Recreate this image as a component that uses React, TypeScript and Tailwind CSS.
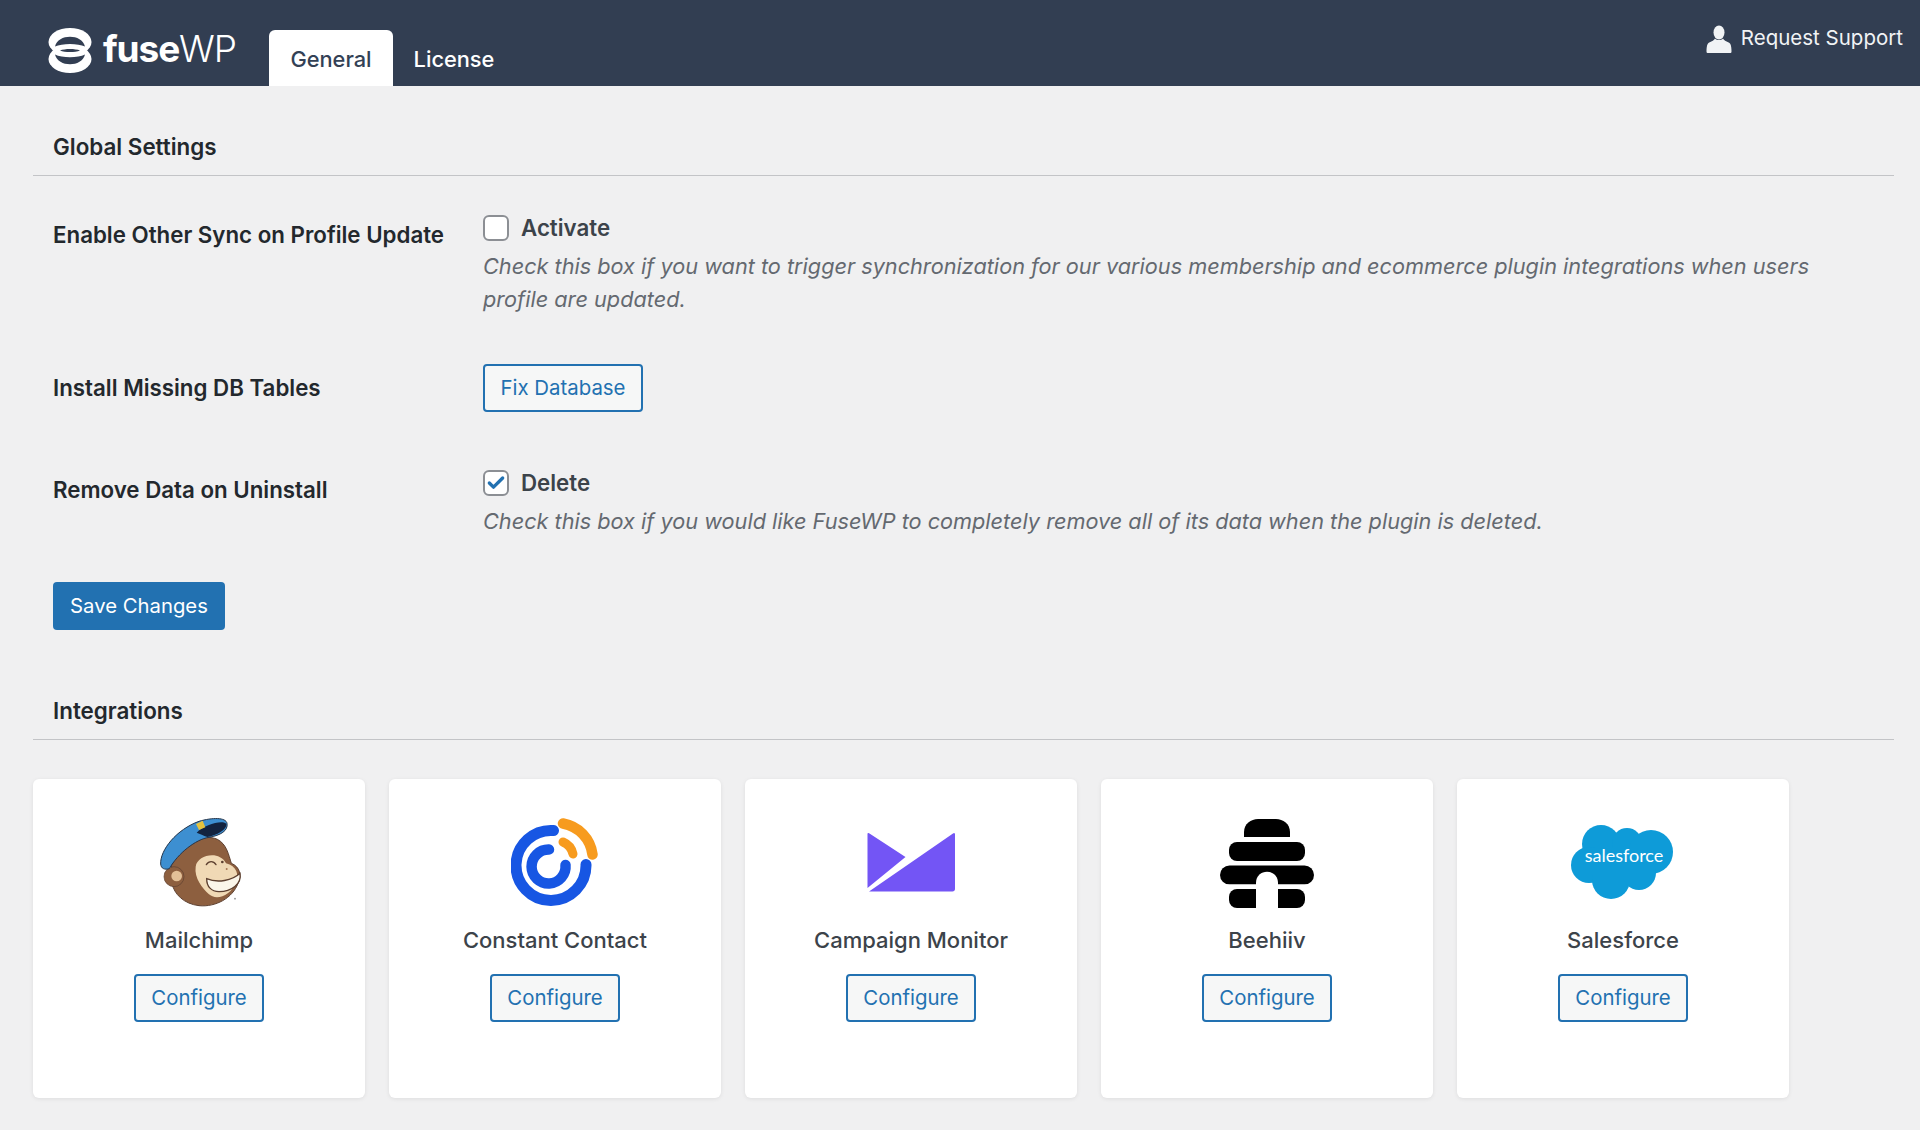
import { Check } from "lucide-react";

const FONT = "font-['Inter','Liberation_Sans',sans-serif]";

function FuseMark() {
  return (
    <svg width="44" height="45" viewBox="0 0 44 45" fill="white">
      <ellipse cx="22" cy="14" rx="21.5" ry="14" />
      <ellipse cx="22" cy="31" rx="21.5" ry="14" />
      <path d="M7 18.5C10 5.5 34 5.5 37 18.5C30 15 14 15 7 18.5Z" fill="#323e52" />
      <path d="M7 26.5C10 39.5 34 39.5 37 26.5C30 30 14 30 7 26.5Z" fill="#323e52" />
      <path d="M12 22.5C17 20.5 27 20.5 32 22.5C27 24.5 17 24.5 12 22.5Z" fill="#323e52" />
    </svg>
  );
}

function PersonIcon() {
  return (
    <svg width="26" height="28" viewBox="0 0 26 28" fill="#f1f3f5">
      <ellipse cx="13" cy="7.5" rx="5.5" ry="7" />
      <path d="M9 13.5C8 16 4 16.5 2 18.5C.7 20 .5 24 .5 26.5C.5 27.5 1 28 2 28H24C25 28 25.5 27.5 25.5 26.5C25.5 24 25.3 20 24 18.5C22 16.5 18 16 17 13.5C15 15.5 11 15.5 9 13.5Z" />
    </svg>
  );
}

function MailchimpLogo() {
  return (
    <svg width="90" height="90" viewBox="40 54 270 270">
      <path d="M92 190C125 125 190 100 230 118C258 132 264 165 272 190C298 200 304 228 292 250C276 294 225 322 175 317C130 312 100 282 94 250Z" fill="#8d5f3f" stroke="#5d4030" strokeWidth="3" />
      <circle cx="100" cy="230" r="30" fill="#8d5f3f" stroke="#5d4030" strokeWidth="2" />
      <circle cx="108" cy="228" r="16" fill="#e3c097" />
      <path d="M165 200C170 165 235 150 256 190C288 198 296 225 286 246C270 290 225 302 204 282C186 264 160 235 165 200Z" fill="#f0d9b5" />
      <path d="M60 192C58 150 108 88 175 64C215 52 256 52 259 70C263 92 240 106 205 112C165 118 112 160 86 206C72 210 61 206 60 192Z" fill="#3d8fd1" stroke="#27364a" strokeWidth="3" />
      <path d="M168 98C190 72 250 58 257 72C259 90 228 106 200 111C188 106 178 102 168 98Z" fill="#13233f" />
      <path d="M166 72L186 62L194 82L175 90Z" fill="#e5c23d" />
      <path d="M198 236C230 250 275 242 298 220C304 252 272 275 235 275C212 275 198 260 198 236Z" fill="#fbf6ea" stroke="#5d4030" strokeWidth="4" />
      <path d="M197 194C205 182 218 182 226 194" fill="none" stroke="#5d4030" strokeWidth="4" strokeLinecap="round" />
      <circle cx="245" cy="186" r="4" fill="#5d4030" />
      <circle cx="258" cy="207" r="3" fill="#a87a55" />
      <circle cx="283" cy="296" r="2.5" fill="#888" />
    </svg>
  );
}

function ConstantContactLogo() {
  return (
    <svg width="88" height="90" viewBox="0 0 88 90" fill="none" strokeLinecap="round">
      <path d="M42.5 12.5A35 35 0 1 0 75 46.5" stroke="#1756e3" strokeWidth="11" />
      <path d="M38 31.5A17 17 0 1 0 54.5 47" stroke="#1756e3" strokeWidth="10.5" />
      <path d="M52 5.5A36 36 0 0 1 81.5 36.5" stroke="#f79b1e" strokeWidth="10.5" />
      <path d="M52 24A17 17 0 0 1 62 36" stroke="#f79b1e" strokeWidth="9" />
    </svg>
  );
}

function CampaignMonitorLogo() {
  return (
    <svg width="88" height="90" viewBox="0 0 88 90" fill="#7355f5">
      <path d="M.5 16C.5 15 1.5 14.5 2.5 15.5L38.5 39L.5 70Z" />
      <path d="M86 15.5C87 14.5 88 15 88 16.5V71C88 72.5 87 73.5 85.5 73.5H2Z" />
    </svg>
  );
}

function BeehiivLogo() {
  return (
    <svg width="94" height="90" viewBox="0 0 94 90" fill="black">
      <path d="M24 19V14C24 6 31 1 38 1H56C63 1 70 6 70 14V19Z" />
      <rect x="9" y="24" width="76" height="19" rx="8" />
      <rect x="0" y="47.5" width="94" height="19" rx="9.5" />
      <rect x="9" y="71" width="76" height="19" rx="8" />
      <path d="M36 90V65C36 50 58 50 58 65V90Z" fill="white" />
      <rect x="0" y="66.5" width="94" height="4.5" fill="white" />
    </svg>
  );
}

function SalesforceLogo() {
  return (
    <svg width="104" height="90" viewBox="0 0 104 90">
      <g fill="#0e9bd8">
        <circle cx="30" cy="26" r="19" />
        <circle cx="56" cy="25" r="15" />
        <circle cx="80" cy="34" r="22" />
        <circle cx="18" cy="47" r="18" />
        <circle cx="40" cy="62" r="19" />
        <circle cx="68" cy="55" r="17" />
        <rect x="22" y="30" width="60" height="30" />
      </g>
      <text x="53" y="44" textAnchor="middle" fill="white" fontSize="18" fontFamily="Lato, 'Open Sans', sans-serif">
        salesforce
      </text>
    </svg>
  );
}

const integrations = [
  { name: "Mailchimp", logo: <MailchimpLogo /> },
  { name: "Constant Contact", logo: <ConstantContactLogo /> },
  { name: "Campaign Monitor", logo: <CampaignMonitorLogo /> },
  { name: "Beehiiv", logo: <BeehiivLogo /> },
  { name: "Salesforce", logo: <SalesforceLogo /> },
];

function SectionTitle({ children }: { children: string }) {
  return (
    <h2 className="border-b border-[#c3c4c7] pb-[13px] pl-5 text-[22.4px] leading-[30px] font-semibold text-[#23282d]">
      {children}
    </h2>
  );
}

function OutlineButton({ children }: { children: string }) {
  return (
    <button className="h-[48px] rounded-[4px] border-2 border-[#2271b1] bg-[#f6f7f7] px-[15.5px] text-[20.4px] text-[#2271b1]">
      {children}
    </button>
  );
}

function CheckField({ label, checked }: { label: string; checked?: boolean }) {
  return (
    <label className="flex h-[26px] items-center gap-3">
      <span className="flex h-[26px] w-[26px] items-center justify-center rounded-[6px] border-2 border-[#8c8f94] bg-white">
        {checked && <Check className="h-5 w-5 text-[#2271b1]" strokeWidth={4} />}
      </span>
      <span className="text-[22.3px] font-semibold text-[#3c434a]">{label}</span>
    </label>
  );
}

export default function App() {
  return (
    <div className={`min-h-[1130px] bg-[#f0f0f1] ${FONT}`}>
      <header className="flex h-[86px] items-start bg-[#323e52]">
        <div className="mt-[28px] ml-[48px] flex w-[221px] items-center gap-[11px]">
          <FuseMark />
          <span className="-mt-[4px] text-[37px] leading-none tracking-[-0.03em] text-white">
            <span className="font-bold">fuse</span>
            <span className="font-light">WP</span>
          </span>
        </div>
        <nav className="mt-[30px] flex h-[56px] text-[21.8px] font-medium">
          <a className="flex w-[124px] items-center justify-center rounded-t-[6px] bg-white pt-[3px] text-[#334155]">
            General
          </a>
          <a className="flex w-[122px] items-center justify-center pt-[3px] text-white">License</a>
        </nav>
        <a className="mt-[25px] mr-[17px] ml-auto flex items-center gap-[9px] text-[20.5px] text-[#f1f3f5]">
          <PersonIcon />
          <span className="-mt-[2px]">Request Support</span>
        </a>
      </header>

      <main className="pr-[26px] pl-[33px]">
        <section className="pt-[46px]">
          <SectionTitle>Global Settings</SectionTitle>

          <div className="mt-[39px] grid grid-cols-[430px_1fr] pl-5">
            <div className="pt-[5px] text-[22.3px] leading-[30px] font-semibold text-[#23282d]">
              Enable Other Sync on Profile Update
            </div>
            <div>
              <CheckField label="Activate" />
              <p className="mt-[9px] max-w-[1340px] text-[21.7px] leading-[33px] text-[#646970] italic">
                Check this box if you want to trigger synchronization for our various membership and ecommerce plugin
                integrations when users profile are updated.
              </p>
            </div>
          </div>

          <div className="mt-[48px] grid grid-cols-[430px_1fr] items-center pl-5">
            <div className="text-[22.3px] leading-[30px] font-semibold text-[#23282d]">Install Missing DB Tables</div>
            <div>
              <OutlineButton>Fix Database</OutlineButton>
            </div>
          </div>

          <div className="mt-[58px] grid grid-cols-[430px_1fr] pl-5">
            <div className="pt-[5px] text-[22.3px] leading-[30px] font-semibold text-[#23282d]">
              Remove Data on Uninstall
            </div>
            <div>
              <CheckField label="Delete" checked />
              <p className="mt-[9px] text-[21.7px] leading-[33px] text-[#646970] italic">
                Check this box if you would like FuseWP to completely remove all of its data when the plugin is deleted.
              </p>
            </div>
          </div>

          <button className="mt-[44px] ml-5 h-[48px] w-[172px] rounded-[4px] bg-[#2271b1] text-[20.3px] text-white">
            Save Changes
          </button>
        </section>

        <section className="pt-[66px]">
          <SectionTitle>Integrations</SectionTitle>

          <div className="mt-[39px] flex gap-[24px]">
            {integrations.map((item) => (
              <div
                key={item.name}
                className="flex h-[319px] w-[332px] flex-col items-center rounded-[6px] bg-white pt-[39px] shadow-[0_1px_4px_rgba(0,0,0,0.08)]"
              >
                <div className="flex h-[90px] items-center justify-center">{item.logo}</div>
                <div className="mt-[17px] text-[22px] leading-[30px] font-medium text-[#3c434a]">{item.name}</div>
                <div className="mt-[19px]">
                  <OutlineButton>Configure</OutlineButton>
                </div>
              </div>
            ))}
          </div>
        </section>
      </main>
    </div>
  );
}
